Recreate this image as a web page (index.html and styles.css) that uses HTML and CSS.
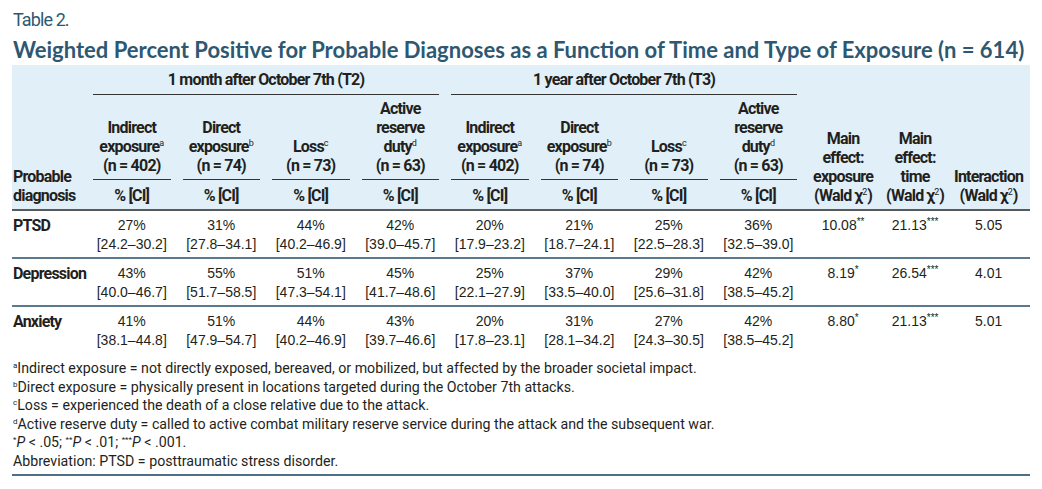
FILE: index.html
```html
<!DOCTYPE html>
<html lang="en">
<head>
<meta charset="utf-8">
<title>Table 2</title>
<link rel="stylesheet" href="styles.css">
</head>
<body>
<div class="page">
  <div class="label">Table 2.</div>
  <h1 class="title">Weighted Percent Positive for Probable Diagnoses as a Function of Time and Type of Exposure (n = 614)</h1>
  <table class="tbl">
    <colgroup>
      <col class="c-lab">
      <col class="c-val"><col class="c-val"><col class="c-val"><col class="c-val">
      <col class="c-val"><col class="c-val"><col class="c-val"><col class="c-val">
      <col class="c-exp"><col class="c-time"><col class="c-int">
    </colgroup>
    <thead>
      <tr class="r-group">
        <th></th>
        <th colspan="4"><div class="grp">1 month after October 7th (T2)</div></th>
        <th colspan="4"><div class="grp">1 year after October 7th (T3)</div></th>
        <th></th><th></th><th></th>
      </tr>
      <tr class="r-sub">
        <th rowspan="2" class="lab-head">Probable<br>diagnosis</th>
        <th><div class="sub">Indirect<br>exposure<sup>a</sup><br>(n = 402)</div></th>
        <th><div class="sub">Direct<br>exposure<sup>b</sup><br>(n = 74)</div></th>
        <th><div class="sub">Loss<sup>c</sup><br>(n = 73)</div></th>
        <th><div class="sub">Active<br>reserve<br>duty<sup>d</sup><br>(n = 63)</div></th>
        <th><div class="sub">Indirect<br>exposure<sup>a</sup><br>(n = 402)</div></th>
        <th><div class="sub">Direct<br>exposure<sup>b</sup><br>(n = 74)</div></th>
        <th><div class="sub">Loss<sup>c</sup><br>(n = 73)</div></th>
        <th><div class="sub">Active<br>reserve<br>duty<sup>d</sup><br>(n = 63)</div></th>
        <th rowspan="2" class="stat-head">Main<br>effect:<br>exposure<br>(Wald χ<sup>2</sup>)</th>
        <th rowspan="2" class="stat-head">Main<br>effect:<br>time<br>(Wald χ<sup>2</sup>)</th>
        <th rowspan="2" class="stat-head">Interaction<br>(Wald χ<sup>2</sup>)</th>
      </tr>
      <tr class="r-ci">
        <th>% [CI]</th><th>% [CI]</th><th>% [CI]</th><th>% [CI]</th>
        <th>% [CI]</th><th>% [CI]</th><th>% [CI]</th><th>% [CI]</th>
      </tr>
    </thead>
    <tbody>
      <tr>
        <th class="rowlab">PTSD</th>
        <td>27%<br>[24.2–30.2]</td>
        <td>31%<br>[27.8–34.1]</td>
        <td>44%<br>[40.2–46.9]</td>
        <td>42%<br>[39.0–45.7]</td>
        <td>20%<br>[17.9–23.2]</td>
        <td>21%<br>[18.7–24.1]</td>
        <td>25%<br>[22.5–28.3]</td>
        <td>36%<br>[32.5–39.0]</td>
        <td>10.08<sup class="st">**</sup></td>
        <td>21.13<sup class="st">***</sup></td>
        <td>5.05</td>
      </tr>
      <tr>
        <th class="rowlab">Depression</th>
        <td>43%<br>[40.0–46.7]</td>
        <td>55%<br>[51.7–58.5]</td>
        <td>51%<br>[47.3–54.1]</td>
        <td>45%<br>[41.7–48.6]</td>
        <td>25%<br>[22.1–27.9]</td>
        <td>37%<br>[33.5–40.0]</td>
        <td>29%<br>[25.6–31.8]</td>
        <td>42%<br>[38.5–45.2]</td>
        <td>8.19<sup class="st">*</sup></td>
        <td>26.54<sup class="st">***</sup></td>
        <td>4.01</td>
      </tr>
      <tr>
        <th class="rowlab">Anxiety</th>
        <td>41%<br>[38.1–44.8]</td>
        <td>51%<br>[47.9–54.7]</td>
        <td>44%<br>[40.2–46.9]</td>
        <td>43%<br>[39.7–46.6]</td>
        <td>20%<br>[17.8–23.1]</td>
        <td>31%<br>[28.1–34.2]</td>
        <td>27%<br>[24.3–30.5]</td>
        <td>42%<br>[38.5–45.2]</td>
        <td>8.80<sup class="st">*</sup></td>
        <td>21.13<sup class="st">***</sup></td>
        <td>5.01</td>
      </tr>
    </tbody>
  </table>
  <div class="notes">
    <p><sup>a</sup>Indirect exposure = not directly exposed, bereaved, or mobilized, but affected by the broader societal impact.</p>
    <p><sup>b</sup>Direct exposure = physically present in locations targeted during the October 7th attacks.</p>
    <p><sup>c</sup>Loss = experienced the death of a close relative due to the attack.</p>
    <p><sup>d</sup>Active reserve duty = called to active combat military reserve service during the attack and the subsequent war.</p>
    <p><sup>*</sup><i>P</i> &lt; .05; <sup>**</sup><i>P</i> &lt; .01; <sup>***</sup><i>P</i> &lt; .001.</p>
    <p>Abbreviation: PTSD = posttraumatic stress disorder.</p>
  </div>
</div>
</body>
</html>
```
FILE: styles.css
```css
html, body { margin: 0; padding: 0; background: #fff; }
body { color: #231f20; }
.page { padding: 9px 12px 0 12px; width: 1018px; }

.label {
  font-family: Roboto, "Liberation Sans", sans-serif;
  font-size: 18px;
  line-height: 22px;
  letter-spacing: -0.9px;
  color: #2e5872;
  padding-left: 1px;
}
.title {
  margin: 5px 0 0 0;
  font-family: Lato, "Open Sans", sans-serif;
  font-weight: 700;
  font-size: 22px;
  line-height: 28px;
  color: #2e5872;
  white-space: nowrap;
  padding-left: 1px;
}

.tbl {
  border-collapse: collapse;
  table-layout: fixed;
  width: 1018px;
  margin-top: 1px;
}
.c-lab { width: 75px; }
.c-val { width: 89.5px; }
.c-exp { width: 80px; }
.c-time { width: 64px; }
.c-int { width: 83px; }

.tbl thead { background: #e0eff8; }
.tbl th {
  font-family: Roboto, "Liberation Sans", sans-serif;
  font-weight: 700;
  font-size: 16px;
  letter-spacing: -0.8px;
  line-height: 19px;
  color: #231f20;
  text-align: center;
  padding: 0;
  white-space: nowrap;
}
.tbl thead tr.r-ci th { border-bottom: 2px solid #58595b; padding: 6px 0 4px; }
.tbl thead th.lab-head, .tbl thead th.stat-head { border-bottom: 2px solid #58595b; vertical-align: bottom; padding-bottom: 4px; }
.lab-head { text-align: left !important; padding-left: 1px !important; }

.r-group th { padding: 5px 0 0; vertical-align: top; }
.grp { margin: 0 6px; border-bottom: 1.5px solid #333; padding-bottom: 5px; }
.r-sub th { vertical-align: bottom; }
.sub { margin: 0 6px; border-bottom: 1.5px solid #333; padding: 4px 0 4px; }

.tbl sup { font-size: 9px; line-height: 0; vertical-align: 6px; font-weight: 400; letter-spacing: 0; }

.tbl tbody tr { border-bottom: 2px solid #5b7a8e; }
.tbl tbody tr:last-child { border-bottom: none; }
.tbl tbody td, .tbl tbody th { padding: 5px 0 3px; vertical-align: top; }
.tbl tbody td {
  font-family: "Liberation Sans", Arial, sans-serif;
  font-size: 14px;
  line-height: 19px;
  text-align: center;
  color: #231f20;
}
.tbl tbody th.rowlab { text-align: left; padding-left: 1px; }
.st { font-size: 10px !important; vertical-align: 5px !important; }

.notes {
  margin-top: 6px;
  border-bottom: 2px solid #4f6f86;
  padding-bottom: 4px;
  font-family: Roboto, "Liberation Sans", sans-serif;
  font-size: 14.2px;
  line-height: 18.5px;
  letter-spacing: 0;
  color: #231f20;
}
.notes p { margin: 0; padding-left: 1px; }
.notes sup { font-size: 8px; line-height: 0; vertical-align: 5px; letter-spacing: 0; }
```
